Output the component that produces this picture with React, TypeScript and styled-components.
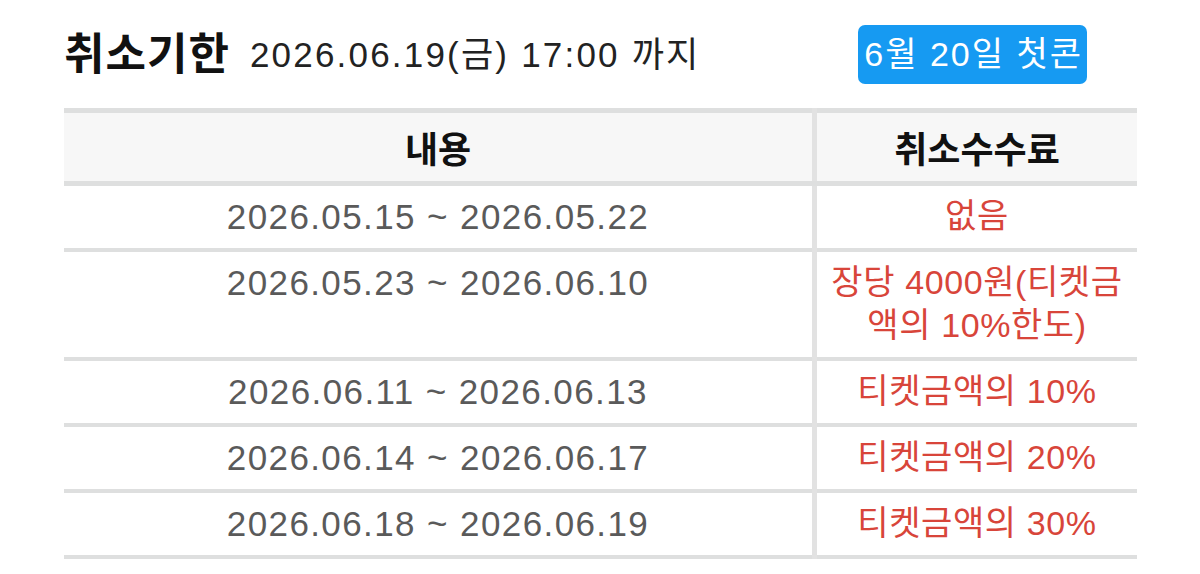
import React from 'react';
import styled, { createGlobalStyle } from 'styled-components';

const GlobalStyle = createGlobalStyle`
  html, body {
    margin: 0;
    padding: 0;
    background: #fff;
  }
  body {
    font-family: 'Liberation Sans', 'Noto Sans CJK KR', sans-serif;
  }
`;

const rows = [
  { period: '2026.05.15 ~ 2026.05.22', fee: '없음' },
  { period: '2026.05.23 ~ 2026.06.10', fee: '장당 4000원(티켓금\n액의 10%한도)' },
  { period: '2026.06.11 ~ 2026.06.13', fee: '티켓금액의 10%' },
  { period: '2026.06.14 ~ 2026.06.17', fee: '티켓금액의 20%' },
  { period: '2026.06.18 ~ 2026.06.19', fee: '티켓금액의 30%' },
];

export default function App() {
  return (
    <>
      <GlobalStyle />
      <Page>
        <TitleBar>
          <Title>취소기한</Title>
          <Deadline>2026.06.19(금) 17:00 까지</Deadline>
          <Badge>6월 20일 첫콘</Badge>
        </TitleBar>

        <Table>
          <thead>
            <tr>
              <HeadCell>내용</HeadCell>
              <HeadCell>취소수수료</HeadCell>
            </tr>
          </thead>
          <tbody>
            {rows.map((r) => (
              <tr key={r.period}>
                <Cell>{r.period}</Cell>
                <Cell $red>
                  {r.fee.split('\n').map((line, i) => (
                    <Line key={i}>{line}</Line>
                  ))}
                </Cell>
              </tr>
            ))}
          </tbody>
        </Table>
      </Page>
    </>
  );
}

const Page = styled.div`
  width: 1200px;
  height: 574px;
  padding: 24px 63px 0 64px;
  box-sizing: border-box;
  overflow: hidden;
`;

const TitleBar = styled.div`
  display: flex;
  align-items: center;
  height: 60px;
  margin-bottom: 24px;
`;

const Title = styled.h2`
  margin: 0;
  font-size: 44px;
  font-weight: 700;
  color: #111;
  letter-spacing: 1px;
  line-height: 1;
  position: relative;
  top: 1px;
`;

const Deadline = styled.span`
  margin-left: 20px;
  font-size: 35px;
  letter-spacing: 2.2px;
  color: #222;
  line-height: 1;
`;

const Badge = styled.span`
  margin-left: auto;
  margin-right: 50px;
  background: #169af2;
  color: #fff;
  font-size: 34px;
  letter-spacing: 2px;
  line-height: 59px;
  height: 59px;
  padding: 0 4px 0 6px;
  border-radius: 7px;
`;

const Table = styled.table`
  width: 100%;
  border-collapse: collapse;
  border-top: 5px solid #dedfdf;
  table-layout: fixed;

  th:first-child, td:first-child {
    width: 748px;
  }
  tr > *:first-child {
    border-right: 5px solid #e2e2e2;
  }
`;

const HeadCell = styled.th`
  height: 68px;
  padding: 0;
  background: #f7f7f7;
  font-size: 36px;
  font-weight: 700;
  color: #111;
  text-align: center;
  border-bottom: 5px solid #dedfdf;
`;

const Cell = styled.td<{ $red?: boolean }>`
  padding: 9px 4px 10px;
  vertical-align: top;
  text-align: center;
  font-size: ${(p) => (p.$red ? '34px' : '35px')};
  letter-spacing: ${(p) => (p.$red ? '0.6px' : '1.4px')};
  line-height: 43px;
  color: ${(p) => (p.$red ? '#d8453a' : '#5a5a5a')};
  border-bottom: 4px solid #dedfdf;
`;

const Line = styled.div`
  white-space: nowrap;
`;
